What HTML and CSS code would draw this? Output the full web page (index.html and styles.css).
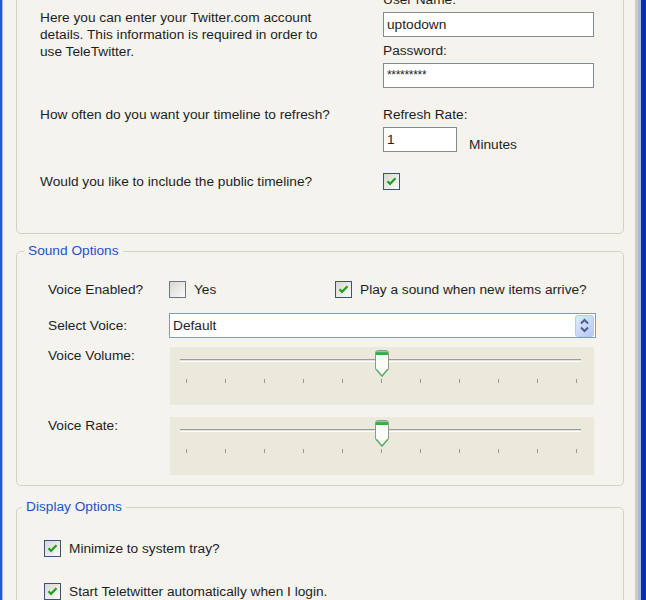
FILE: index.html
```html
<!DOCTYPE html>
<html lang="en">
<head>
  <meta charset="UTF-8" />
  <meta name="viewport" content="width=device-width, initial-scale=1" />
  <title>TeleTwitter Options</title>
  <link rel="stylesheet" href="styles.css">
</head>
<body>

<div class="window">
  <div class="client">

    <!-- Account -->
    <div class="group account">
      <div class="acct-row">
        <p class="intro">Here you can enter your Twitter.com account details. This information is required in order to use TeleTwitter.</p>
        <div class="field">
          <label>User Name:</label>
          <div class="textbox">uptodown</div>
          <label class="next">Password:</label>
          <div class="textbox password">*********</div>
        </div>
      </div>

      <div class="acct-row refresh">
        <p class="question">How often do you want your timeline to refresh?</p>
        <div class="field">
          <label>Refresh Rate:</label>
          <div class="rate">
            <div class="textbox short">1</div>
            <span class="unit">Minutes</span>
          </div>
        </div>
      </div>

      <div class="acct-row public">
        <p class="question">Would you like to include the public timeline?</p>
        <div class="field checks">
          <span class="check on"><svg width="15" height="15" viewBox="0 0 15 15"><path d="M3.5 7.2 L6 9.8 L11.5 4.2" fill="none" stroke="#22a022" stroke-width="2.2"/></svg></span>
        </div>
      </div>
    </div>

    <!-- Sound -->
    <fieldset class="group sound">
      <legend>Sound Options</legend>

      <div class="row">
        <span class="row-label">Voice Enabled?</span>
        <div class="option yes">
          <span class="check off"></span>
          <span>Yes</span>
        </div>
        <div class="option">
          <span class="check on"><svg width="15" height="15" viewBox="0 0 15 15"><path d="M3.5 7.2 L6 9.8 L11.5 4.2" fill="none" stroke="#22a022" stroke-width="2.2"/></svg></span>
          <span>Play a sound when new items arrive?</span>
        </div>
      </div>

      <div class="row select-row">
        <span class="row-label">Select Voice:</span>
        <div class="select">
          <span>Default</span>
          <svg class="spin" width="19" height="22" viewBox="0 0 19 22">
            <defs>
              <linearGradient id="spinbg" x1="0" y1="0" x2="1" y2="1">
                <stop offset="0" stop-color="#e1eafe"/>
                <stop offset="1" stop-color="#b4c8f6"/>
              </linearGradient>
            </defs>
            <rect x="0.5" y="0.5" width="18" height="21" rx="2.5" fill="url(#spinbg)" stroke="#b9c9ef"/>
            <path d="M6 8.5 L9.5 5 L13 8.5" fill="none" stroke="#4c5f8a" stroke-width="2"/>
            <path d="M6 12.5 L9.5 16 L13 12.5" fill="none" stroke="#4c5f8a" stroke-width="2"/>
          </svg>
        </div>
      </div>

      <div class="row slider-row">
        <span class="row-label">Voice Volume:</span>
        <div class="slider">
          <div class="track"></div>
          <div class="ticks">
            <i></i><i></i><i></i><i></i><i></i><i></i><i></i><i></i><i></i><i></i><i></i>
            <svg class="thumb" style="left: 50%" width="16" height="29" viewBox="0 0 16 29">
              <path d="M1.5 4 Q1.5 1.5 4 1.5 H12 Q14.5 1.5 14.5 4 V20 L8 27.5 L1.5 20 Z" fill="#fbfbf8" stroke="#8c9b90"/>
              <path d="M2 4 Q2 2 4 2 H12 Q14 2 14 4 V6 H2 Z" fill="#3caa48"/>
              <path d="M3 2.6 H13" stroke="#8ed99a" stroke-width="1"/>
              <path d="M2.2 20.2 L8 27 L13.8 20.2" fill="none" stroke="#5cae66" stroke-width="1.4"/>
            </svg>
          </div>
        </div>
      </div>

      <div class="row slider-row rate-row">
        <span class="row-label">Voice Rate:</span>
        <div class="slider">
          <div class="track"></div>
          <div class="ticks">
            <i></i><i></i><i></i><i></i><i></i><i></i><i></i><i></i><i></i><i></i><i></i>
            <svg class="thumb" style="left: 50%" width="16" height="29" viewBox="0 0 16 29">
              <path d="M1.5 4 Q1.5 1.5 4 1.5 H12 Q14.5 1.5 14.5 4 V20 L8 27.5 L1.5 20 Z" fill="#fbfbf8" stroke="#8c9b90"/>
              <path d="M2 4 Q2 2 4 2 H12 Q14 2 14 4 V6 H2 Z" fill="#3caa48"/>
              <path d="M3 2.6 H13" stroke="#8ed99a" stroke-width="1"/>
              <path d="M2.2 20.2 L8 27 L13.8 20.2" fill="none" stroke="#5cae66" stroke-width="1.4"/>
            </svg>
          </div>
        </div>
      </div>
    </fieldset>

    <!-- Display -->
    <fieldset class="group display">
      <legend>Display Options</legend>

      <div class="option">
        <span class="check on"><svg width="15" height="15" viewBox="0 0 15 15"><path d="M3.5 7.2 L6 9.8 L11.5 4.2" fill="none" stroke="#22a022" stroke-width="2.2"/></svg></span>
        <span>Minimize to system tray?</span>
      </div>
      <div class="option autostart">
        <span class="check on"><svg width="15" height="15" viewBox="0 0 15 15"><path d="M3.5 7.2 L6 9.8 L11.5 4.2" fill="none" stroke="#22a022" stroke-width="2.2"/></svg></span>
        <span>Start Teletwitter automatically when I login.</span>
      </div>
    </fieldset>

  </div>
</div>

</body>
</html>
```

FILE: styles.css
```css
:root {
  --bg: #f4f3ee;
  --text: #1e1e1e;
  --group-line: #d3d2c4;
  --legend: #2552c6;
  --field-line: #858a91;
  --slider-bg: #ebe9dc;
}

body {
  margin: 0;
  font-family: 'Liberation Sans', Arial, sans-serif;
  font-size: 13.7px;
  line-height: 17px;
  color: var(--text);
  background: var(--bg);
  overflow: hidden;
}

/* window frame */
.window {
  display: flex;
  height: 600px;
  overflow: hidden;
  border-left: 2px solid #2456d8;
  border-right: 5px solid #0b2fa8;
}

.client {
  flex: 1;
  min-width: 0;
  background: var(--bg);
  border-left: 1px solid #a9bde9;
  border-right: 3px solid #a6b9e9;
  box-shadow: inset -3px 0 0 #cfcdc3;
}

.group {
  margin: 0 14px 0 13px;
  border: 1px solid var(--group-line);
  border-radius: 5px;
  min-width: 0;
}

legend {
  color: var(--legend);
  line-height: 16px;
  padding: 0 4px;
}

p {
  margin: 0;
}

/* account */
.account {
  margin-top: -40px;
  padding: 30px 0 43px 23px;
}

.acct-row {
  display: grid;
  grid-template-columns: 343px 211px;
}

.intro {
  margin-top: 18px;
  width: 290px;
}

.field label {
  display: block;
}

.field .next {
  margin-top: 5px;
}

.textbox {
  box-sizing: border-box;
  height: 25px;
  margin-top: 4px;
  padding: 0 3px;
  border: 1px solid var(--field-line);
  background: #fff;
  line-height: 23px;
}

.password {
  font-size: 12px;
  letter-spacing: -0.3px;
}

.refresh {
  margin-top: 18px;
}

.rate {
  display: flex;
  align-items: flex-start;
  gap: 12px;
}

.textbox.short {
  width: 74px;
}

.unit {
  margin-top: 14px;
  line-height: 15px;
}

.public {
  margin-top: 21px;
}

.checks {
  display: flex;
}

/* checkboxes */
.check {
  display: inline-flex;
  align-items: center;
  justify-content: center;
  box-sizing: border-box;
  width: 17px;
  height: 17px;
  flex: none;
  border: 1px solid #3b5570;
  background: linear-gradient(135deg, #d8d7cf, #fbfbf8);
}

.check.off {
  border-color: #6b7787;
}

.option {
  display: flex;
  align-items: center;
  gap: 8px;
}

/* sound */
.sound {
  margin-top: 9px;
  padding: 22px 27px 10px 31px;
}

.sound legend,
.display legend {
  margin-left: -24px;
}

.row {
  display: flex;
  align-items: center;
}

.row-label {
  width: 121px;
  flex: none;
}

.option.yes {
  width: 166px;
}

.select-row {
  margin-top: 15px;
}

.select {
  flex: 1;
  display: flex;
  align-items: center;
  justify-content: space-between;
  box-sizing: border-box;
  height: 25px;
  padding: 0 1px 0 3px;
  border: 1px solid #7f9db9;
  background: #fff;
}

.slider-row {
  align-items: flex-start;
  margin-top: 9px;
}

.rate-row {
  margin-top: 12px;
}

.slider {
  flex: 1;
  height: 58px;
  margin: 0 2px 0 1px;
  background: var(--slider-bg);
  overflow: hidden;
}

.track {
  height: 1px;
  margin: 12px 13px 0 10px;
  background: #e3e2da;
  border-top: 1px solid #9d9c96;
  border-bottom: 1px solid #fff;
}

.ticks {
  position: relative;
  display: flex;
  justify-content: space-between;
  width: 391px;
  margin: 17px 0 0 16px;
}

.ticks i {
  width: 1px;
  height: 4px;
  background: #9a998f;
}

.thumb {
  position: absolute;
  top: -30px;
  transform: translateX(-50%);
}

/* display */
.display {
  margin-top: 13px;
  padding: 25px 20px 40px 27px;
}

.display legend {
  margin-left: -22px;
}

.autostart {
  margin-top: 26px;
}
```
